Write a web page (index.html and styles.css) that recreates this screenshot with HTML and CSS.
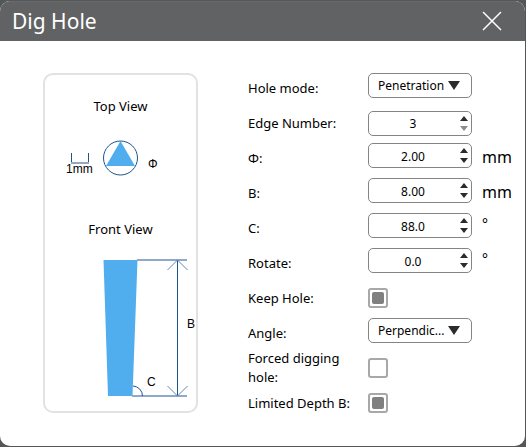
FILE: index.html
```html
<!DOCTYPE html>
<html lang="en">
<head>
<meta charset="utf-8">
<title>Dig Hole</title>
<link rel="stylesheet" href="styles.css">
</head>
<body>
<main class="dialog">
  <header class="titlebar">
    <h1 class="title">Dig Hole</h1>
    <button class="close" type="button" aria-label="Close">
      <svg width="20" height="20" viewBox="0 0 20 20"><path d="M1 1L19 19M19 1L1 19"/></svg>
    </button>
  </header>
  <div class="content">
    <section class="preview">
      <h2 class="caption">Top View</h2>
      <svg class="drawing" width="151" height="60" viewBox="0 0 151 60">
        <path class="line" d="M26.500 23V32M43.500 23V32"/>
        <path class="soft" d="M26 33H44"/>
        <path class="fill" d="M75.500 11L90 36H61z"/>
        <circle class="line" cx="75.500" cy="28" r="17"/>
        <text x="21" y="43">1mm</text>
        <text x="103" y="38">Φ</text>
      </svg>
      <h2 class="caption">Front View</h2>
      <svg class="drawing" width="151" height="150" viewBox="0 0 151 150">
        <path class="fill" d="M58.500 10H92.500L87.500 146H63z"/>
        <path class="soft" d="M92 10H142M87 146H142"/>
        <path class="line" d="M132.500 10V146"/>
        <path class="arrow" d="M122.500 20L132.500 10L142.500 20M122.500 136L132.500 146L142.500 136"/>
        <path class="line" d="M88 136A10 10 0 0 1 97.500 146"/>
        <text x="142" y="78">B</text>
        <text x="102" y="136">C</text>
      </svg>
    </section>
    <form class="form">
      <label class="label" for="mode">Hole mode:</label>
      <div class="combo">
        <select id="mode"><option>Penetration</option></select>
        <svg class="caret" width="12" height="9" viewBox="0 0 12 9"><path d="M0 0H12L6 9z"/></svg>
      </div>

      <label class="label" for="edges">Edge Number:</label>
      <div class="spin middle">
        <input id="edges" type="text" value="3">
        <svg class="steps" width="8" height="15" viewBox="0 0 8 15"><path d="M0 5L4 0L8 5z"/><path class="off" d="M0 10H8L4 15z"/></svg>
      </div>

      <label class="label" for="phi">Φ:</label>
      <div class="spin">
        <input id="phi" type="text" value="2.00">
        <svg class="steps" width="8" height="15" viewBox="0 0 8 15"><path d="M0 5L4 0L8 5z"/><path d="M0 10H8L4 15z"/></svg>
      </div>
      <span class="unit">mm</span>

      <label class="label" for="depth">B:</label>
      <div class="spin">
        <input id="depth" type="text" value="8.00">
        <svg class="steps" width="8" height="15" viewBox="0 0 8 15"><path d="M0 5L4 0L8 5z"/><path d="M0 10H8L4 15z"/></svg>
      </div>
      <span class="unit">mm</span>

      <label class="label" for="taper">C:</label>
      <div class="spin">
        <input id="taper" type="text" value="88.0">
        <svg class="steps" width="8" height="15" viewBox="0 0 8 15"><path d="M0 5L4 0L8 5z"/><path d="M0 10H8L4 15z"/></svg>
      </div>
      <span class="unit degree">°</span>

      <label class="label" for="rotate">Rotate:</label>
      <div class="spin">
        <input id="rotate" type="text" value="0.0">
        <svg class="steps" width="8" height="15" viewBox="0 0 8 15"><path d="M0 5L4 0L8 5z"/><path d="M0 10H8L4 15z"/></svg>
      </div>
      <span class="unit degree">°</span>

      <label class="label" for="keep">Keep Hole:</label>
      <input class="check" id="keep" type="checkbox" checked>

      <label class="label" for="angle">Angle:</label>
      <div class="combo">
        <select id="angle"><option>Perpendic...</option></select>
        <svg class="caret" width="12" height="9" viewBox="0 0 12 9"><path d="M0 0H12L6 9z"/></svg>
      </div>

      <label class="label" for="forced">Forced digging hole:</label>
      <input class="check" id="forced" type="checkbox">

      <label class="label" for="limited">Limited Depth B:</label>
      <input class="check" id="limited" type="checkbox" checked>
    </form>
  </div>
</main>
</body>
</html>
```
FILE: styles.css
```css
* {
  box-sizing: border-box;
}

body {
  margin: 0;
  background: #555657;
  color: #000;
  font: 13px/19px "Noto Sans", sans-serif;
}

.dialog {
  display: flex;
  flex-direction: column;
  min-height: calc(100vh - 2px);
  margin: 1px 1px 1px 0;
  background: #fff;
  border-radius: 10px;
  overflow: hidden;
}

.titlebar {
  display: flex;
  align-items: center;
  justify-content: space-between;
  height: 40px;
  padding: 0 23px 0 12px;
  background: #616264;
  border-radius: 10px 10px 0 0;
  box-shadow: inset 0 1px #68696b;
}

.title {
  margin: 0;
  color: #fff;
  font-size: 21px;
  font-weight: 400;
  line-height: 40px;
}

.close {
  display: flex;
  padding: 0;
  border: 0;
  background: none;
}

.close path {
  fill: none;
  stroke: #fff;
  stroke-width: 1.5;
}

.content {
  display: flex;
  align-items: flex-start;
  gap: 50px;
  padding: 32px 10px 28px 43px;
}

.preview {
  flex: none;
  padding: 20px 0 11px;
  border: 2px solid #e2e2e2;
  border-radius: 10px;
}

.caption {
  margin: 0;
  font-size: 13px;
  font-weight: 400;
  line-height: 22px;
  text-align: center;
}

.drawing {
  display: block;
  margin: 13px 0 28px;
  font: 12px "Liberation Sans", sans-serif;
}

.caption:nth-of-type(2) + .drawing {
  margin: 10px 0 0;
}

.line,
.soft,
.arrow {
  fill: none;
  stroke: #1d5590;
}

.soft {
  stroke: #8eaac8;
  stroke-width: 2;
}

.arrow {
  stroke: #6288b2;
}

.fill {
  fill: #50aeef;
}

.form {
  flex: 1;
  display: grid;
  grid-template-columns: 112px 104px 1fr;
  grid-auto-rows: 30px;
  row-gap: 5px;
  column-gap: 8px;
}

.label {
  grid-column: 1;
  align-self: center;
}

.combo,
.spin {
  position: relative;
  align-self: start;
  height: 25px;
}

.middle {
  align-self: center;
}

.combo select,
.spin input {
  display: block;
  width: 100%;
  height: 25px;
  margin: 0;
  border: 1px solid #848484;
  border-radius: 5px;
  background: #fff;
  color: #000;
  font: 12px "Noto Sans", sans-serif;
}

.combo select {
  appearance: none;
  padding: 0 0 0 9px;
}

.spin input {
  padding: 1px 14px 0 0;
  text-align: center;
}

.caret,
.steps {
  position: absolute;
  top: 8px;
  right: 12px;
  fill: #2b2b2b;
  pointer-events: none;
}

.steps {
  top: 5px;
  right: 4px;
}

.off {
  fill: #8c8c8c;
}

.unit {
  margin-left: 2px;
  font-size: 16px;
  line-height: 28px;
}

.degree {
  font-size: 14px;
  line-height: 22px;
}

.check {
  appearance: none;
  align-self: center;
  width: 20px;
  height: 20px;
  margin: 0;
  padding: 2px;
  border: 2px solid #a8a8a8;
  border-radius: 3px;
  background: #fff;
}

.check:checked::before {
  content: "";
  display: block;
  width: 12px;
  height: 12px;
  border-radius: 2px;
  background: #808080;
}
```
